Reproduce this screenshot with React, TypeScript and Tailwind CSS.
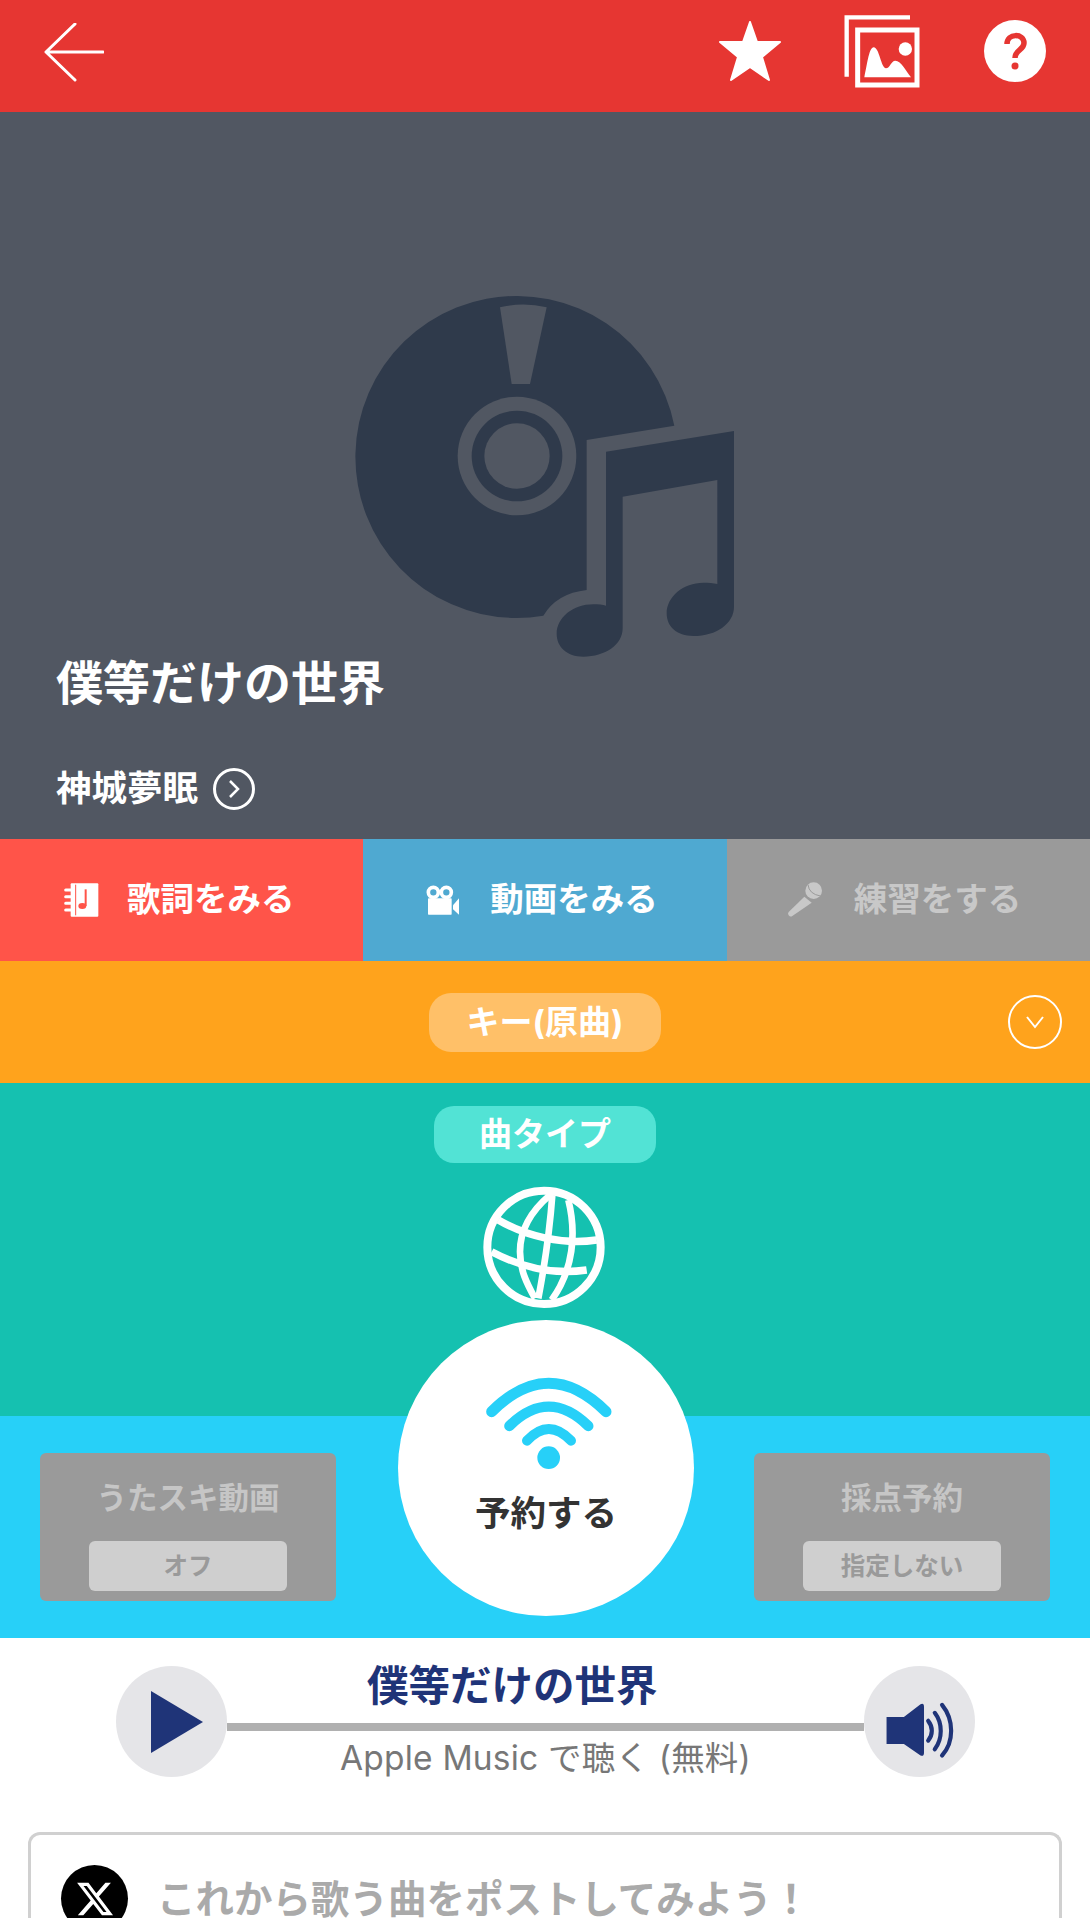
const FONT = "font-['Inter','Noto_Sans_CJK_JP',sans-serif]"

function HeaderIcons() {
  return (
    <div className="flex items-center mb-[10px]">
      <svg width="62" height="60" viewBox="0 0 62 60">
        <polygon
          fill="#fff"
          stroke="#fff"
          strokeWidth="2"
          strokeLinejoin="round"
          points="31,1 38,21 61,21 43,36 50,59 31,46 12,59 19,36 1,21 24,21"
        />
      </svg>
      <svg width="100" height="95" viewBox="0 0 300 285" className="ml-[55px] mt-[3px]">
        <path d="M32 215V37H222" fill="none" stroke="#fff" strokeWidth="13" />
        <rect x="65" y="75" width="178" height="165" fill="none" stroke="#fff" strokeWidth="15" />
        <path d="M85 217 C95 170 100 127 113 127 C130 127 135 190 150 190 C162 190 165 167 178 167 C195 167 212 200 225 217Z" fill="#fff" />
        <circle cx="208" cy="132" r="20" fill="#fff" />
      </svg>
      <svg width="62" height="62" viewBox="0 0 62 62" className="ml-[48px]">
        <circle cx="31" cy="31" r="31" fill="#fff" />
        <path d="M23 24 C23 13 40 13 40 23 C40 30 31 30 31 38" fill="none" stroke="#e63632" strokeWidth="5.5" />
        <circle cx="31" cy="46" r="3.5" fill="#e63632" />
      </svg>
    </div>
  )
}

function DiscArt() {
  return (
    <svg width="430" height="400" viewBox="0 0 1290 1200" className="mx-auto shrink-0">
      <path
        fill="#2f3a4b"
        d="M1033 467 L770 510 L770 960 Q680 970 640 1037 A483 483 0 1 1 1033 467Z"
      />
      <path fill="#515762" d="M510 112 Q580 95 650 112 L600 342 L545 342Z" />
      <circle cx="561" cy="558" r="178" fill="#515762" />
      <circle cx="561" cy="558" r="136" fill="#2f3a4b" />
      <circle cx="561" cy="558" r="98" fill="#515762" />
      <path
        fill="#2f3a4b"
        d="M828 545 L1212 483 L1212 1010 C1212 1060 1160 1098 1090 1098 C1040 1098 1010 1070 1010 1030 C1010 980 1060 938 1120 938 C1135 938 1150 939 1162 942 L1162 630 L878 680 L878 1075 C878 1125 825 1160 760 1160 C710 1160 680 1130 680 1092 C680 1042 730 1003 790 1003 C805 1003 818 1004 828 1007Z"
      />
    </svg>
  )
}

function BookIcon() {
  return (
    <svg width="70" height="60" viewBox="0 0 210 180" className="shrink-0">
      <rect x="62" y="40" width="83" height="100" fill="#fff" rx="3" />
      <path d="M47 60H72M47 80H72M47 100H72M47 120H72" stroke="#fff" strokeWidth="9" strokeLinecap="round" />
      <path d="M77 44V136" stroke="#ff5449" strokeWidth="3" />
      <path d="M107 58V108" stroke="#ff5449" strokeWidth="6" />
      <ellipse cx="97" cy="108" rx="12" ry="9" fill="#ff5449" />
    </svg>
  )
}

function CameraIcon() {
  return (
    <svg width="70" height="60" viewBox="0 0 210 180" className="shrink-0">
      <circle cx="61" cy="67" r="15" fill="none" stroke="#fff" strokeWidth="11" />
      <circle cx="100" cy="67" r="15" fill="none" stroke="#fff" strokeWidth="11" />
      <rect x="45" y="85" width="71" height="49" rx="2" fill="#fff" />
      <polygon points="120,106 138,85 138,134 120,118" fill="#fff" />
    </svg>
  )
}

function MicIcon() {
  return (
    <svg width="70" height="60" viewBox="0 0 210 180" className="shrink-0">
      <circle cx="110" cy="62" r="25" fill="#c8c8c8" />
      <path d="M93 44 Q96 72 130 78" fill="none" stroke="#9a9a9a" strokeWidth="3" />
      <path d="M82 80 L104 98 L46 138 Q40 142 35 136 Q31 131 35 126Z" fill="#c8c8c8" />
    </svg>
  )
}

function Globe() {
  return (
    <svg width="150" height="150" viewBox="0 0 450 450" className="mx-auto mt-[7px] shrink-0">
      <g fill="none" stroke="#fff" strokeWidth="24">
        <circle cx="222" cy="232" r="170" />
        <path d="M240 75 C175 130 150 190 150 245 C150 300 170 340 195 385" strokeWidth="20" />
        <path d="M247 75 C240 170 225 280 205 385" strokeWidth="20" />
        <path d="M295 90 C320 190 310 300 245 390" strokeWidth="20" />
        <path d="M85 150 C170 200 280 225 380 210" strokeWidth="22" />
        <path d="M65 245 C150 290 250 315 350 300" strokeWidth="22" />
      </g>
    </svg>
  )
}

function Wifi() {
  return (
    <svg width="150" height="110" viewBox="0 0 450 330" className="mt-[50px] shrink-0">
      <g fill="none" stroke="#27d0f8" strokeLinecap="round">
        <path d="M62 125 Q233 -45 405 125" strokeWidth="33" />
        <path d="M115 168 Q233 52 352 168" strokeWidth="31" />
        <path d="M168 212 Q233 142 300 212" strokeWidth="30" />
      </g>
      <circle cx="233" cy="263" r="34" fill="#27d0f8" />
    </svg>
  )
}

function SpeakerIcon() {
  return (
    <svg width="111" height="111" viewBox="15 10 320 320">
      <path d="M80 157 H130 L178 120 Q188 115 188 128 V260 Q188 272 178 268 L130 235 H80Z" fill="#1f3478" />
      <g fill="none" stroke="#1f3478" strokeWidth="12" strokeLinecap="round">
        <path d="M200 168 C214 185 214 208 200 225" />
        <path d="M219 145 C242 175 242 220 219 250" />
        <path d="M240 122 C275 165 275 230 240 268" />
      </g>
    </svg>
  )
}

function OptionCard({ title, value }: { title: string; value: string }) {
  return (
    <div className="w-[296px] h-[148px] mt-[36px] bg-[#9a9a9a] rounded-[6px] flex flex-col items-center">
      <div className="mt-[27px] h-[36px] flex items-center text-[30.5px] font-bold leading-none text-[#c6c6c6]">
        {title}
      </div>
      <div className="mt-[25px] w-[198px] h-[50px] bg-[#cfcfcf] rounded-[6px] flex items-center justify-center text-[24.5px] font-bold leading-none text-[#9a9a9a]">
        {value}
      </div>
    </div>
  )
}

function ActionButton({ bg, color, icon, label }: { bg: string; color: string; icon: React.ReactNode; label: string }) {
  return (
    <div className={`${bg} ${color} flex items-center pl-[50px] gap-[7px]`}>
      {icon}
      <span className="text-[33.5px] font-bold leading-none">{label}</span>
    </div>
  )
}

export default function App() {
  return (
    <div className={`${FONT} w-[1090px] h-[1918px] overflow-hidden bg-white`}>
      <header className="h-[112px] bg-[#e63632] flex items-center justify-between pl-[44px] pr-[44px]">
        <svg width="60" height="60" viewBox="0 0 60 60" className="mt-[-6px]">
          <path d="M31 1 L2 29 L31 57 M2 29 H59" fill="none" stroke="#fff" strokeWidth="3" strokeLinecap="round" strokeLinejoin="round" />
        </svg>
        <HeaderIcons />
      </header>

      <section className="h-[727px] bg-[#515762] flex flex-col pt-[158px]">
        <DiscArt />
        <h1 className="ml-[56px] mt-[-15px] text-[47px] font-bold leading-[56px] text-white">僕等だけの世界</h1>
        <div className="ml-[56px] mt-[57px] flex items-center text-white">
          <span className="text-[35.5px] font-bold leading-none">神城夢眠</span>
          <span className="ml-[15px] w-[42px] h-[42px] rounded-full border-[3px] border-white flex items-center justify-center">
            <svg width="12" height="20" viewBox="0 0 12 20">
              <path d="M2 2 L10 10 L2 18" fill="none" stroke="#fff" strokeWidth="2.5" />
            </svg>
          </span>
        </div>
      </section>

      <div className="grid grid-cols-3 h-[122px]">
        <ActionButton bg="bg-[#ff5449]" color="text-white" icon={<BookIcon />} label="歌詞をみる" />
        <ActionButton bg="bg-[#4fa9d1]" color="text-white" icon={<CameraIcon />} label="動画をみる" />
        <ActionButton bg="bg-[#9a9a9a]" color="text-[#c8c8c8]" icon={<MicIcon />} label="練習をする" />
      </div>

      <div className="h-[122px] bg-[#ffa31c] flex items-center justify-center relative">
        <div className="w-[232px] h-[59px] rounded-[22px] bg-[#ffc068] flex items-center justify-center text-[33px] font-bold leading-none text-white">
          キー(原曲)
        </div>
        <span className="absolute left-[1008px] top-[34px] w-[54px] h-[54px] rounded-full border-[2.5px] border-white flex items-center justify-center">
          <svg width="20" height="14" viewBox="0 0 20 14">
            <path d="M2 2 L10 12 L18 2" fill="none" stroke="#fff" strokeWidth="2" />
          </svg>
        </span>
      </div>

      <div className="relative">
        <div className="h-[333px] bg-[#15c1b0] flex flex-col pt-[23px]">
          <div className="mx-auto w-[222px] h-[57px] rounded-[20px] bg-[#52e3d5] flex items-center justify-center text-[33px] font-bold leading-none text-white">
            曲タイプ
          </div>
          <Globe />
        </div>
        <div className="h-[222px] bg-[#27d0f8] flex justify-between px-[40px] pt-[1px]">
          <OptionCard title="うたスキ動画" value="オフ" />
          <OptionCard title="採点予約" value="指定しない" />
        </div>
        <div className="absolute left-[398px] top-[237px] w-[296px] h-[296px] rounded-full bg-white flex flex-col items-center">
          <Wifi />
          <span className="mt-[16px] text-[35.5px] font-semibold leading-none text-[#333]">予約する</span>
        </div>
      </div>

      <div className="relative h-[194px] pt-[28px] pl-[116px] pr-[115px]">
        <div className="flex items-center">
          <div className="w-[111px] h-[111px] rounded-full bg-[#e5e5e8] flex items-center pl-[35px] shrink-0">
            <svg width="52" height="62" viewBox="0 0 52 62">
              <polygon points="0,0 52,31 0,62" fill="#1f3478" />
            </svg>
          </div>
          <div className="flex-1 h-[8px] bg-[#b0b0b0] mt-[10px]" />
          <div className="w-[111px] h-[111px] rounded-full bg-[#e5e5e8] shrink-0">
            <SpeakerIcon />
          </div>
        </div>
        <div className="absolute left-[367px] top-[26px] text-[41.5px] font-bold leading-[44px] text-[#1f3478] whitespace-nowrap">
          僕等だけの世界
        </div>
        <div className="absolute left-[340px] top-[100px] text-[33.5px] leading-[40px] tracking-[0.2px] text-[#777] whitespace-nowrap">
          Apple Music で聴く (無料)
        </div>
      </div>

      <div className="mx-[28px] h-[86px] border-[3px] border-b-0 border-[#d0d0d0] rounded-t-[12px] pt-[30px] pl-[30px] flex items-start">
        <div className="w-[67px] h-[67px] rounded-full bg-black flex items-center justify-center shrink-0">
          <svg width="40" height="40" viewBox="0 0 24 24">
            <path fill="#fff" d="M18.244 2.25h3.308l-7.227 8.26 8.502 11.24H16.17l-5.214-6.817L4.99 21.75H1.68l7.73-8.835L1.254 2.25H8.08l4.713 6.231zm-1.161 17.52h1.833L7.084 4.126H5.117z" />
          </svg>
        </div>
        <span className="ml-[29px] mt-[15px] text-[38.5px] font-bold leading-[38px] text-[#aaa] whitespace-nowrap">
          これから歌う曲をポストしてみよう！
        </span>
      </div>
    </div>
  )
}
